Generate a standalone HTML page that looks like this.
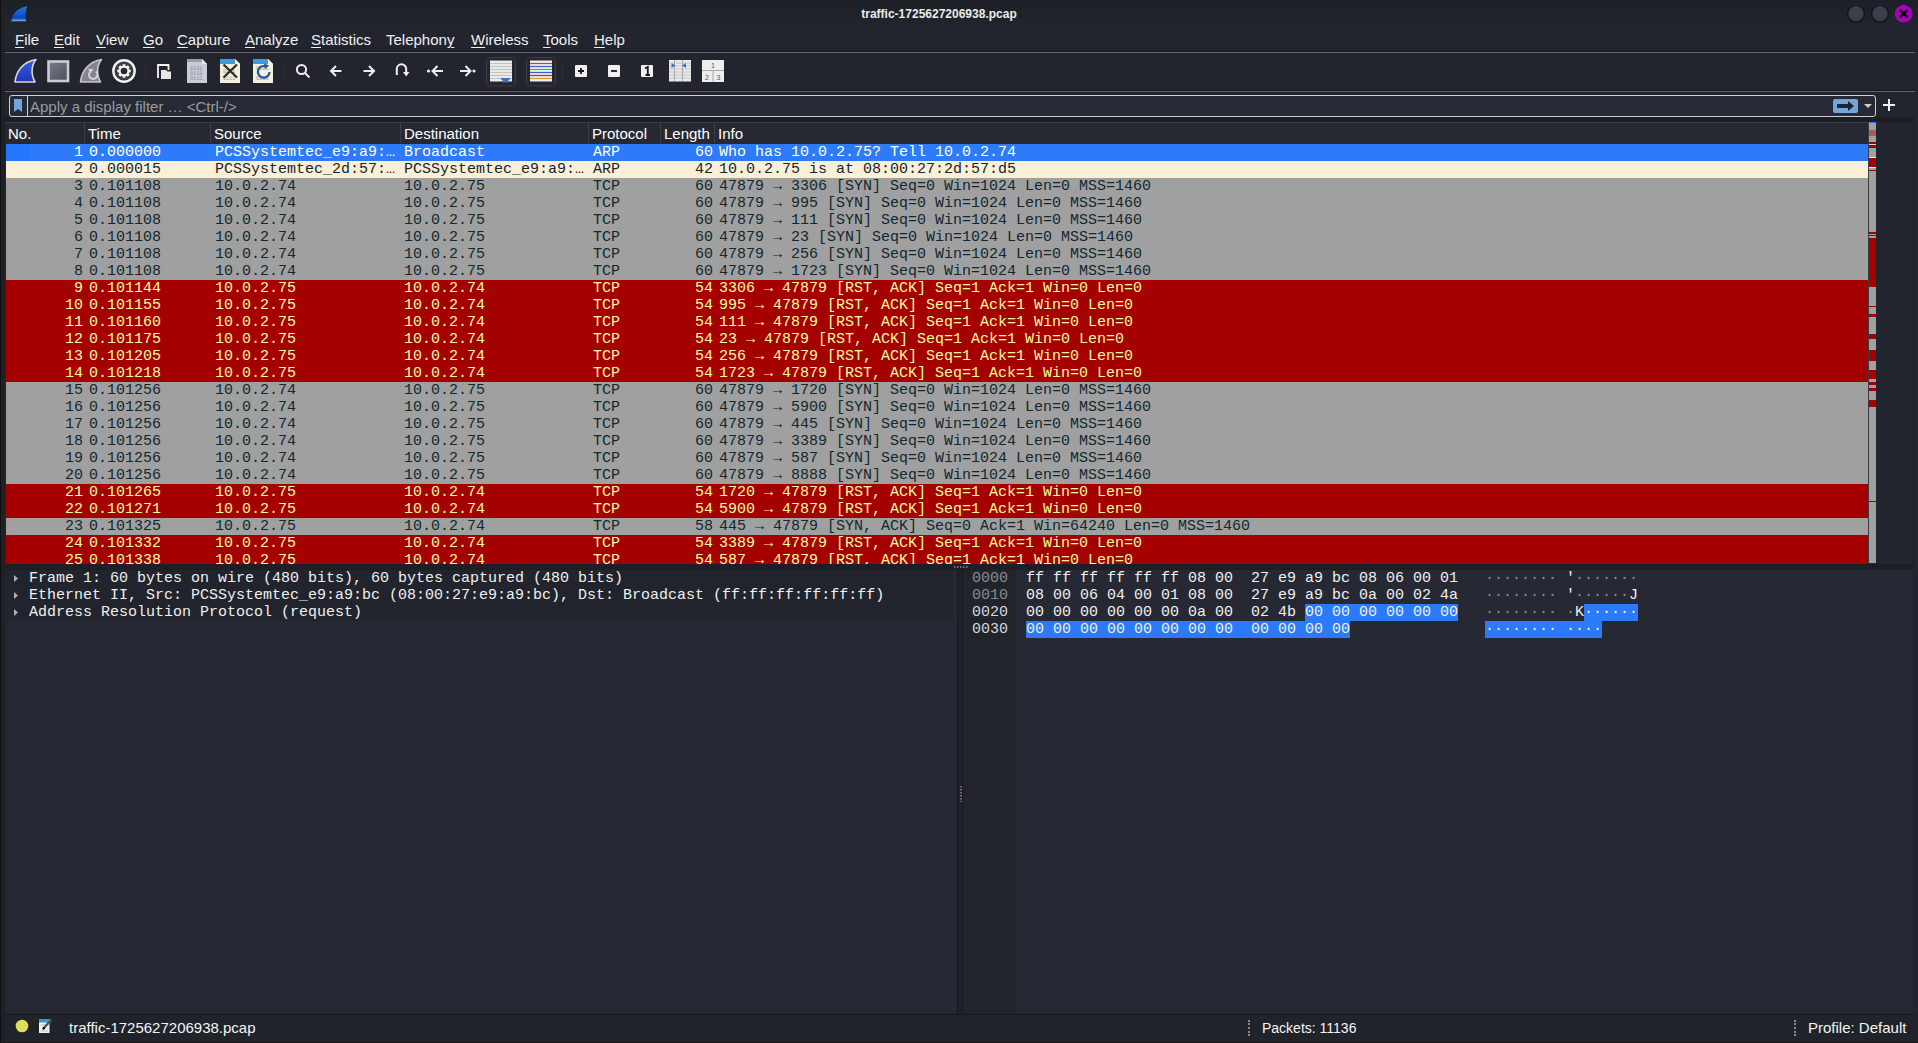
<!DOCTYPE html>
<html><head><meta charset="utf-8">
<style>
html,body{margin:0;padding:0;width:1918px;height:1043px;overflow:hidden;background:#22252d;font-family:"Liberation Sans",sans-serif;color:#fff;}
.abs{position:absolute;}
#lb{position:absolute;left:0;top:0;width:5px;height:1043px;background:#1f2127;border-left:1px solid #0e1013;box-sizing:border-box;}
#title{position:absolute;left:0;top:0;width:1878px;height:28px;text-align:center;font-size:12px;font-weight:bold;line-height:28px;color:#ececec;}
.menu{position:absolute;top:31px;font-size:15px;line-height:18px;color:#f0f0f0;}
.menu u{text-decoration:underline;text-underline-offset:2px;text-decoration-thickness:1px;}
.sep{position:absolute;left:5px;width:1910px;height:1px;background:#63666f;}
.sepd{position:absolute;left:5px;width:1910px;height:1px;background:#16181d;}
#filter{position:absolute;left:9px;top:95px;width:1865px;height:20px;border:1px solid #cfcfcf;border-radius:3px;background:#272a34;}
#fph{position:absolute;left:30px;top:98px;font-size:15px;line-height:18px;color:#9a9aa0;}
#hdr{position:absolute;left:6px;top:122px;width:1862px;height:22px;background:#262932;border-top:1px solid #3a3d45;box-sizing:border-box;}
.h{position:absolute;top:125px;font-size:15px;line-height:18px;color:#fff;}
.hs{position:absolute;top:123px;width:1px;height:20px;background:#3c3f48;}
.r{position:absolute;left:6px;width:1862px;height:17px;font-family:"Liberation Mono",monospace;font-size:15px;line-height:17px;white-space:pre;}
.r .c{position:absolute;top:0;}
.c.no{left:0;width:77px;text-align:right;}
.c.tm{left:83px;}
.c.src{left:209px;}
.c.dst{left:398px;}
.c.pr{left:587px;}
.c.ln{left:655px;width:52px;text-align:right;}
.c.inf{left:713px;}
.sel{background:linear-gradient(90deg,#2676fd 0,#2676fd 23px,#2d7bf8 23px);color:#fff;}
.arp{background:#faf0d7;color:#12272e;}
.syn{background:#a0a0a0;color:#12272e;}
.rst{background:#a40000;color:#fffc9c;}
.mono{font-family:"Liberation Mono",monospace;font-size:15px;line-height:17px;white-space:pre;}
#status{position:absolute;left:0;top:1013px;width:1918px;height:30px;}
</style></head><body>
<div class="abs" style="left:0;top:0;width:1918px;height:28px;background:linear-gradient(#1d1f26,#22252d)"></div>
<div id="lb"></div>
<div id="title">traffic-1725627206938.pcap</div>
<!-- shark logo -->
<svg class="abs" style="left:0;top:0" width="30" height="28" viewBox="0 0 30 28"><defs><linearGradient id="lg" x1="0" y1="0" x2="0" y2="1"><stop offset="0" stop-color="#1a7ae8"/><stop offset="0.8" stop-color="#0a48c0"/><stop offset="1" stop-color="#8ab0f0"/></linearGradient></defs><path d="M11.3 21.2 C12.5 13 18 8 27.2 6.3 C25.5 11 25 16 26 21.2 Z" fill="url(#lg)"/></svg>
<!-- window buttons -->
<svg class="abs" style="left:1840px;top:0" width="78" height="28" viewBox="0 0 78 28">
<circle cx="16" cy="13.7" r="8.3" fill="#3b3f4c" stroke="#111317" stroke-width="1.4"/>
<circle cx="40" cy="13.7" r="8.3" fill="#3b3f4c" stroke="#111317" stroke-width="1.4"/>
<circle cx="63.7" cy="13.7" r="8.9" fill="#a800b8"/>
<path d="M60 10 L67.4 17.4 M67.4 10 L60 17.4" stroke="#0a000a" stroke-width="2.4"/>
</svg>
<div class="menu" style="left:15px"><u>F</u>ile</div>
<div class="menu" style="left:54px"><u>E</u>dit</div>
<div class="menu" style="left:96px"><u>V</u>iew</div>
<div class="menu" style="left:143px"><u>G</u>o</div>
<div class="menu" style="left:177px"><u>C</u>apture</div>
<div class="menu" style="left:245px"><u>A</u>nalyze</div>
<div class="menu" style="left:311px"><u>S</u>tatistics</div>
<div class="menu" style="left:386px">Telephon<u>y</u></div>
<div class="menu" style="left:471px"><u>W</u>ireless</div>
<div class="menu" style="left:543px"><u>T</u>ools</div>
<div class="menu" style="left:594px"><u>H</u>elp</div>
<div class="sepd" style="top:51px"></div><div class="sep" style="top:52px"></div>
<svg class="abs" style="left:0;top:0" width="740" height="92" viewBox="0 0 740 92">
<defs>
<linearGradient id="gb" x1="0" y1="0" x2="0" y2="1"><stop offset="0" stop-color="#3a5fe0"/><stop offset="1" stop-color="#1f35b8"/></linearGradient>
<linearGradient id="gs" x1="0" y1="0" x2="1" y2="1"><stop offset="0" stop-color="#7a7d88"/><stop offset="1" stop-color="#4c4f58"/></linearGradient>
</defs>
<!-- 1 shark fin blue -->
<path d="M15 82 C16 72 22 62 36 59.5 C31.5 65 30.5 74 35 82 Z" fill="url(#gb)" stroke="#d6d6d6" stroke-width="1.6" stroke-linejoin="round"/>
<!-- 2 stop -->
<rect x="48.5" y="61.5" width="19.5" height="19.5" fill="url(#gs)" stroke="#c9ccd4" stroke-width="2.6"/>
<!-- 3 restart fin gray -->
<path d="M80.5 82 C81.5 72 87.5 62 101.5 59.5 C97 65 96 74 100.5 82 Z" fill="#84868e" stroke="#c4c6cc" stroke-width="1.6" stroke-linejoin="round"/>
<path d="M89.6 72.6 A4.2 4.2 0 1 0 95.8 71.4" fill="none" stroke="#d4d6da" stroke-width="1.9"/>
<path d="M88.2 68.8 L93.6 69.2 L90.2 73.6 Z" fill="#d4d6da"/>
<!-- 4 options gear -->
<circle cx="124" cy="71" r="10.7" fill="#3c3c40" stroke="#f2f2f2" stroke-width="2.4"/>
<path d="M129.06 69.43 L130.76 69.63 L130.76 72.37 L129.06 72.57 L128.69 73.47 L129.75 74.81 L127.81 76.75 L126.47 75.69 L125.57 76.06 L125.37 77.76 L122.63 77.76 L122.43 76.06 L121.53 75.69 L120.19 76.75 L118.25 74.81 L119.31 73.47 L118.94 72.57 L117.24 72.37 L117.24 69.63 L118.94 69.43 L119.31 68.53 L118.25 67.19 L120.19 65.25 L121.53 66.31 L122.43 65.94 L122.63 64.24 L125.37 64.24 L125.57 65.94 L126.47 66.31 L127.81 65.25 L129.75 67.19 L128.69 68.53 Z" fill="#f4f4f4"/>
<circle cx="124" cy="71" r="3.3" fill="#2a2a2e"/>
<!-- 5 open -->
<path d="M158 78 V65 H168.5 V70" fill="none" stroke="#f4f4f4" stroke-width="1.8"/>
<path d="M161 70 H166 L167.5 71.5 H171 V79 H161 Z" fill="#e6e6e6"/>
<!-- 6 file gray -->
<path d="M187 59 H202 L207 64 V83 H187 Z" fill="#c9ccd6"/>
<path d="M187 59 H202 L205 62 H187 Z" fill="#9c9ea6"/>
<path d="M202 59 V64 H207 Z" fill="#e8e9ee"/>
<text x="190" y="70" font-family="Liberation Mono" font-size="5.2" fill="#8a8c96">0101</text>
<text x="190" y="75" font-family="Liberation Mono" font-size="5.2" fill="#8a8c96">0110</text>
<text x="190" y="80" font-family="Liberation Mono" font-size="5.2" fill="#8a8c96">0111</text>
<!-- 7 close file -->
<path d="M220 59 H235 L240 64 V83 H220 Z" fill="#f2f0dc"/>
<rect x="220" y="59" width="16" height="5" fill="#3c9ce0"/>
<path d="M235 59 V64 H240 Z" fill="#f8f8f0"/>
<text x="223" y="73" font-family="Liberation Mono" font-size="5.2" fill="#9a9a90">0101</text>
<text x="223" y="80" font-family="Liberation Mono" font-size="5.2" fill="#9a9a90">0111</text>
<path d="M223.5 64.5 L237 77.5 M237 64.5 L223.5 77.5" stroke="#2a2a2a" stroke-width="2.2"/>
<!-- 8 reload file -->
<path d="M253 59 H268 L273 64 V83 H253 Z" fill="#f2f0dc"/>
<rect x="253" y="59" width="16" height="5" fill="#3c9ce0"/>
<path d="M268 59 V64 H273 Z" fill="#f8f8f0"/>
<text x="256" y="70" font-family="Liberation Mono" font-size="5.2" fill="#9a9a90">0101</text>
<text x="256" y="80" font-family="Liberation Mono" font-size="5.2" fill="#9a9a90">0111</text>
<path d="M266 66.5 A5.8 5.8 0 1 0 269.5 72" fill="none" stroke="#1f55a8" stroke-width="2.2"/>
<path d="M264 63.5 L269 65.5 L265 69 Z" fill="#1f55a8"/>
<!-- 9 search -->
<circle cx="301.5" cy="69.5" r="4.6" fill="none" stroke="#eeeeee" stroke-width="2"/>
<path d="M305 73 L309.5 77.5" stroke="#eeeeee" stroke-width="1.8"/>
<!-- 10 back -->
<path d="M341.5 71 H331 M336 66 L331 71 L336 76" fill="none" stroke="#eeeeee" stroke-width="2"/>
<!-- 11 forward -->
<path d="M363.5 71 H374 M369 66 L374 71 L369 76" fill="none" stroke="#eeeeee" stroke-width="2"/>
<!-- 12 jump -->
<path d="M396.8 75 V69 A4.7 4.7 0 0 1 406.2 69 V73" fill="none" stroke="#eeeeee" stroke-width="2"/>
<path d="M403 72 H409.5 L406.2 76.5 Z" fill="#eeeeee"/>
<!-- 13 first -->
<circle cx="428.5" cy="71" r="1.6" fill="#eeeeee"/>
<path d="M443 71 H433 M437.5 66 L432.5 71 L437.5 76" fill="none" stroke="#eeeeee" stroke-width="2"/>
<!-- 14 last -->
<circle cx="474" cy="71" r="1.6" fill="#eeeeee"/>
<path d="M460 71 H470 M465.5 66 L470.5 71 L465.5 76" fill="none" stroke="#eeeeee" stroke-width="2"/>
<!-- 15 autoscroll (checked) -->
<rect x="486.5" y="57.5" width="29" height="28.5" rx="3" fill="#24272f" stroke="#3a3d46" stroke-width="1"/>
<rect x="490" y="60.5" width="22" height="21" fill="#eaeaea"/>
<path d="M490 63.5 H512 M490 66.5 H512 M490 69.5 H512 M490 72.5 H512 M490 75.5 H512 M490 78.5 H512" stroke="#b8b8b8" stroke-width="0.8"/>
<path d="M500 78 H511 L508 81 V82.5 H503 V81 Z" fill="#3a72c0"/>
<!-- 16 colorize (checked) -->
<rect x="526.5" y="57.5" width="29" height="28.5" rx="3" fill="#24272f" stroke="#3a3d46" stroke-width="1"/>
<rect x="530" y="60.5" width="22" height="21" fill="#eeeeee"/>
<path d="M530 63.5 H552" stroke="#e03a3a" stroke-width="1.2"/>
<path d="M530 66.5 H552" stroke="#3a5fc8" stroke-width="1.2"/>
<path d="M530 69.5 H552" stroke="#40b840" stroke-width="1.2"/>
<path d="M530 72.5 H552" stroke="#3a5fc8" stroke-width="1.2"/>
<path d="M530 75.5 H552" stroke="#7a3a9a" stroke-width="1.2"/>
<path d="M530 78.5 H552" stroke="#d0a020" stroke-width="1.2"/>
<!-- 17 zoom in -->
<rect x="575" y="65" width="12" height="12" rx="1" fill="#f0f0f0"/>
<path d="M578 71 H584 M581 68 V74" stroke="#1a1a1a" stroke-width="1.8"/>
<!-- 18 zoom out -->
<rect x="608" y="65" width="12" height="12" rx="1" fill="#f0f0f0"/>
<path d="M611 71 H617" stroke="#1a1a1a" stroke-width="1.8"/>
<!-- 19 normal -->
<rect x="641" y="65" width="12" height="12" rx="1" fill="#f0f0f0"/>
<path d="M645 68.5 L647.8 66.8 V75 M645.5 75 H650" fill="none" stroke="#1a1a1a" stroke-width="1.8"/>
<!-- 20 resize columns -->
<rect x="669" y="60" width="22" height="21.5" fill="#eaeaea"/>
<path d="M669 63 H691 M669 66 H691 M669 69 H691 M669 72 H691 M669 75 H691 M669 78 H691" stroke="#bdbdbd" stroke-width="0.8"/>
<path d="M674.5 60 V81.5 M682.5 60 V81.5" stroke="#9a9a9a" stroke-width="0.8"/>
<path d="M671.5 63 L675.5 65.5 L671.5 68 Z M686 63 L682 65.5 L686 68 Z" fill="#3a72c0"/>
<!-- 21 layout -->
<rect x="702" y="60" width="22" height="22" fill="#eeeeee"/>
<path d="M702 70.5 H724 M713 70.5 V82" stroke="#a8a8a8" stroke-width="1"/>
<text x="711" y="68" font-family="Liberation Sans" font-size="7" fill="#555">1</text>
<text x="705" y="79.5" font-family="Liberation Sans" font-size="7" fill="#555">2</text>
<text x="716.5" y="79.5" font-family="Liberation Sans" font-size="7" fill="#555">3</text>
<path d="M145.5 63.5 V80" stroke="#2a2d35" stroke-width="1"/>
<path d="M284.5 63.5 V80" stroke="#2a2d35" stroke-width="1"/>
<path d="M562.5 63.5 V80" stroke="#2a2d35" stroke-width="1"/>
</svg>

<div class="sepd" style="top:90px"></div><div class="sep" style="top:91px"></div>
<div id="filter"></div>
<div class="abs" style="left:27px;top:96px;width:1px;height:20px;background:#cfcfcf"></div>
<svg class="abs" style="left:13px;top:99px" width="10" height="14" viewBox="0 0 10 14"><path d="M1 0 H9 V13 L5 10 L1 13 Z" fill="#6fa6dc"/></svg>
<div id="fph">Apply a display filter … &lt;Ctrl-/&gt;</div>
<svg class="abs" style="left:1833px;top:99px" width="26" height="14" viewBox="0 0 26 14"><rect x="0" y="0" width="25" height="14" rx="2" fill="#6fa6dc"/><path d="M4 5 H15 V2 L21 7 L15 12 V9 H4 Z" fill="#1d2430"/></svg>
<svg class="abs" style="left:1863px;top:103px" width="10" height="6" viewBox="0 0 10 6"><path d="M1 1 H9 L5 5 Z" fill="#cfcfcf"/></svg>
<svg class="abs" style="left:1882px;top:98px" width="14" height="14" viewBox="0 0 14 14"><path d="M7 1 V13 M1 7 H13" stroke="#f0f0f0" stroke-width="2"/></svg>

<div class="abs" style="left:5px;top:117px;width:1908px;height:5px;background:#1c1e25"></div>
<div id="hdr"></div>
<div class="h" style="left:8px">No.</div>
<div class="hs" style="left:84px"></div>
<div class="h" style="left:88px">Time</div>
<div class="hs" style="left:210px"></div>
<div class="h" style="left:214px">Source</div>
<div class="hs" style="left:400px"></div>
<div class="h" style="left:404px">Destination</div>
<div class="hs" style="left:588px"></div>
<div class="h" style="left:592px">Protocol</div>
<div class="hs" style="left:660px"></div>
<div class="h" style="left:664px">Length</div>
<div class="hs" style="left:714px"></div>
<div class="h" style="left:718px">Info</div>
<div class="abs" style="left:6px;top:144px;width:1862px;height:420px;overflow:hidden">
<div style="position:absolute;left:-6px;top:-144px;width:1918px;height:600px">
<div class="r sel" style="top:144px"><span class="c no">1</span><span class="c tm">0.000000</span><span class="c src">PCSSystemtec_e9:a9:…</span><span class="c dst">Broadcast</span><span class="c pr">ARP</span><span class="c ln">60</span><span class="c inf">Who has 10.0.2.75? Tell 10.0.2.74</span></div>
<div class="r arp" style="top:161px"><span class="c no">2</span><span class="c tm">0.000015</span><span class="c src">PCSSystemtec_2d:57:…</span><span class="c dst">PCSSystemtec_e9:a9:…</span><span class="c pr">ARP</span><span class="c ln">42</span><span class="c inf">10.0.2.75 is at 08:00:27:2d:57:d5</span></div>
<div class="r syn" style="top:178px"><span class="c no">3</span><span class="c tm">0.101108</span><span class="c src">10.0.2.74</span><span class="c dst">10.0.2.75</span><span class="c pr">TCP</span><span class="c ln">60</span><span class="c inf">47879 → 3306 [SYN] Seq=0 Win=1024 Len=0 MSS=1460</span></div>
<div class="r syn" style="top:195px"><span class="c no">4</span><span class="c tm">0.101108</span><span class="c src">10.0.2.74</span><span class="c dst">10.0.2.75</span><span class="c pr">TCP</span><span class="c ln">60</span><span class="c inf">47879 → 995 [SYN] Seq=0 Win=1024 Len=0 MSS=1460</span></div>
<div class="r syn" style="top:212px"><span class="c no">5</span><span class="c tm">0.101108</span><span class="c src">10.0.2.74</span><span class="c dst">10.0.2.75</span><span class="c pr">TCP</span><span class="c ln">60</span><span class="c inf">47879 → 111 [SYN] Seq=0 Win=1024 Len=0 MSS=1460</span></div>
<div class="r syn" style="top:229px"><span class="c no">6</span><span class="c tm">0.101108</span><span class="c src">10.0.2.74</span><span class="c dst">10.0.2.75</span><span class="c pr">TCP</span><span class="c ln">60</span><span class="c inf">47879 → 23 [SYN] Seq=0 Win=1024 Len=0 MSS=1460</span></div>
<div class="r syn" style="top:246px"><span class="c no">7</span><span class="c tm">0.101108</span><span class="c src">10.0.2.74</span><span class="c dst">10.0.2.75</span><span class="c pr">TCP</span><span class="c ln">60</span><span class="c inf">47879 → 256 [SYN] Seq=0 Win=1024 Len=0 MSS=1460</span></div>
<div class="r syn" style="top:263px"><span class="c no">8</span><span class="c tm">0.101108</span><span class="c src">10.0.2.74</span><span class="c dst">10.0.2.75</span><span class="c pr">TCP</span><span class="c ln">60</span><span class="c inf">47879 → 1723 [SYN] Seq=0 Win=1024 Len=0 MSS=1460</span></div>
<div class="r rst" style="top:280px"><span class="c no">9</span><span class="c tm">0.101144</span><span class="c src">10.0.2.75</span><span class="c dst">10.0.2.74</span><span class="c pr">TCP</span><span class="c ln">54</span><span class="c inf">3306 → 47879 [RST, ACK] Seq=1 Ack=1 Win=0 Len=0</span></div>
<div class="r rst" style="top:297px"><span class="c no">10</span><span class="c tm">0.101155</span><span class="c src">10.0.2.75</span><span class="c dst">10.0.2.74</span><span class="c pr">TCP</span><span class="c ln">54</span><span class="c inf">995 → 47879 [RST, ACK] Seq=1 Ack=1 Win=0 Len=0</span></div>
<div class="r rst" style="top:314px"><span class="c no">11</span><span class="c tm">0.101160</span><span class="c src">10.0.2.75</span><span class="c dst">10.0.2.74</span><span class="c pr">TCP</span><span class="c ln">54</span><span class="c inf">111 → 47879 [RST, ACK] Seq=1 Ack=1 Win=0 Len=0</span></div>
<div class="r rst" style="top:331px"><span class="c no">12</span><span class="c tm">0.101175</span><span class="c src">10.0.2.75</span><span class="c dst">10.0.2.74</span><span class="c pr">TCP</span><span class="c ln">54</span><span class="c inf">23 → 47879 [RST, ACK] Seq=1 Ack=1 Win=0 Len=0</span></div>
<div class="r rst" style="top:348px"><span class="c no">13</span><span class="c tm">0.101205</span><span class="c src">10.0.2.75</span><span class="c dst">10.0.2.74</span><span class="c pr">TCP</span><span class="c ln">54</span><span class="c inf">256 → 47879 [RST, ACK] Seq=1 Ack=1 Win=0 Len=0</span></div>
<div class="r rst" style="top:365px"><span class="c no">14</span><span class="c tm">0.101218</span><span class="c src">10.0.2.75</span><span class="c dst">10.0.2.74</span><span class="c pr">TCP</span><span class="c ln">54</span><span class="c inf">1723 → 47879 [RST, ACK] Seq=1 Ack=1 Win=0 Len=0</span></div>
<div class="r syn" style="top:382px"><span class="c no">15</span><span class="c tm">0.101256</span><span class="c src">10.0.2.74</span><span class="c dst">10.0.2.75</span><span class="c pr">TCP</span><span class="c ln">60</span><span class="c inf">47879 → 1720 [SYN] Seq=0 Win=1024 Len=0 MSS=1460</span></div>
<div class="r syn" style="top:399px"><span class="c no">16</span><span class="c tm">0.101256</span><span class="c src">10.0.2.74</span><span class="c dst">10.0.2.75</span><span class="c pr">TCP</span><span class="c ln">60</span><span class="c inf">47879 → 5900 [SYN] Seq=0 Win=1024 Len=0 MSS=1460</span></div>
<div class="r syn" style="top:416px"><span class="c no">17</span><span class="c tm">0.101256</span><span class="c src">10.0.2.74</span><span class="c dst">10.0.2.75</span><span class="c pr">TCP</span><span class="c ln">60</span><span class="c inf">47879 → 445 [SYN] Seq=0 Win=1024 Len=0 MSS=1460</span></div>
<div class="r syn" style="top:433px"><span class="c no">18</span><span class="c tm">0.101256</span><span class="c src">10.0.2.74</span><span class="c dst">10.0.2.75</span><span class="c pr">TCP</span><span class="c ln">60</span><span class="c inf">47879 → 3389 [SYN] Seq=0 Win=1024 Len=0 MSS=1460</span></div>
<div class="r syn" style="top:450px"><span class="c no">19</span><span class="c tm">0.101256</span><span class="c src">10.0.2.74</span><span class="c dst">10.0.2.75</span><span class="c pr">TCP</span><span class="c ln">60</span><span class="c inf">47879 → 587 [SYN] Seq=0 Win=1024 Len=0 MSS=1460</span></div>
<div class="r syn" style="top:467px"><span class="c no">20</span><span class="c tm">0.101256</span><span class="c src">10.0.2.74</span><span class="c dst">10.0.2.75</span><span class="c pr">TCP</span><span class="c ln">60</span><span class="c inf">47879 → 8888 [SYN] Seq=0 Win=1024 Len=0 MSS=1460</span></div>
<div class="r rst" style="top:484px"><span class="c no">21</span><span class="c tm">0.101265</span><span class="c src">10.0.2.75</span><span class="c dst">10.0.2.74</span><span class="c pr">TCP</span><span class="c ln">54</span><span class="c inf">1720 → 47879 [RST, ACK] Seq=1 Ack=1 Win=0 Len=0</span></div>
<div class="r rst" style="top:501px"><span class="c no">22</span><span class="c tm">0.101271</span><span class="c src">10.0.2.75</span><span class="c dst">10.0.2.74</span><span class="c pr">TCP</span><span class="c ln">54</span><span class="c inf">5900 → 47879 [RST, ACK] Seq=1 Ack=1 Win=0 Len=0</span></div>
<div class="r syn" style="top:518px"><span class="c no">23</span><span class="c tm">0.101325</span><span class="c src">10.0.2.75</span><span class="c dst">10.0.2.74</span><span class="c pr">TCP</span><span class="c ln">58</span><span class="c inf">445 → 47879 [SYN, ACK] Seq=0 Ack=1 Win=64240 Len=0 MSS=1460</span></div>
<div class="r rst" style="top:535px"><span class="c no">24</span><span class="c tm">0.101332</span><span class="c src">10.0.2.75</span><span class="c dst">10.0.2.74</span><span class="c pr">TCP</span><span class="c ln">54</span><span class="c inf">3389 → 47879 [RST, ACK] Seq=1 Ack=1 Win=0 Len=0</span></div>
<div class="r rst" style="top:552px"><span class="c no">25</span><span class="c tm">0.101338</span><span class="c src">10.0.2.75</span><span class="c dst">10.0.2.74</span><span class="c pr">TCP</span><span class="c ln">54</span><span class="c inf">587 → 47879 [RST, ACK] Seq=1 Ack=1 Win=0 Len=0</span></div>
</div></div>
<div class="abs" style="left:1868px;top:122px;width:1px;height:441px;background:#3a3d44"></div>
<div style="position:absolute;left:1869px;width:7px;top:122px;height:1px;background:#2a7afa"></div><div style="position:absolute;left:1869px;width:7px;top:123px;height:7px;background:#a0a0a0"></div><div style="position:absolute;left:1869px;width:7px;top:130px;height:6px;background:#b25a5a"></div><div style="position:absolute;left:1869px;width:7px;top:136px;height:6px;background:#a0a0a0"></div><div style="position:absolute;left:1869px;width:7px;top:142px;height:2px;background:#a40000"></div><div style="position:absolute;left:1869px;width:7px;top:144px;height:1px;background:#d8d8d8"></div><div style="position:absolute;left:1869px;width:7px;top:145px;height:3px;background:#a40000"></div><div style="position:absolute;left:1869px;width:7px;top:148px;height:9px;background:#a0a0a0"></div><div style="position:absolute;left:1869px;width:7px;top:157px;height:1px;background:#faf0d7"></div><div style="position:absolute;left:1869px;width:7px;top:158px;height:9px;background:#a40000"></div><div style="position:absolute;left:1869px;width:7px;top:167px;height:1px;background:#faf0d7"></div><div style="position:absolute;left:1869px;width:7px;top:168px;height:2px;background:#a0a0a0"></div><div style="position:absolute;left:1869px;width:7px;top:170px;height:1px;background:#a40000"></div><div style="position:absolute;left:1869px;width:7px;top:171px;height:61px;background:#a0a0a0"></div><div style="position:absolute;left:1869px;width:7px;top:232px;height:2px;background:#a40000"></div><div style="position:absolute;left:1869px;width:7px;top:234px;height:1px;background:#a0a0a0"></div><div style="position:absolute;left:1869px;width:7px;top:235px;height:1px;background:#a40000"></div><div style="position:absolute;left:1869px;width:7px;top:236px;height:2px;background:#a0a0a0"></div><div style="position:absolute;left:1869px;width:7px;top:238px;height:49px;background:#a40000"></div><div style="position:absolute;left:1869px;width:7px;top:287px;height:19px;background:#a0a0a0"></div><div style="position:absolute;left:1869px;width:7px;top:306px;height:1px;background:#a40000"></div><div style="position:absolute;left:1869px;width:7px;top:307px;height:7px;background:#a0a0a0"></div><div style="position:absolute;left:1869px;width:7px;top:314px;height:3px;background:#a40000"></div><div style="position:absolute;left:1869px;width:7px;top:317px;height:17px;background:#a0a0a0"></div><div style="position:absolute;left:1869px;width:7px;top:334px;height:5px;background:#a40000"></div><div style="position:absolute;left:1869px;width:7px;top:339px;height:11px;background:#a0a0a0"></div><div style="position:absolute;left:1869px;width:7px;top:350px;height:11px;background:#a40000"></div><div style="position:absolute;left:1869px;width:7px;top:361px;height:9px;background:#a0a0a0"></div><div style="position:absolute;left:1869px;width:7px;top:370px;height:9px;background:#a40000"></div><div style="position:absolute;left:1869px;width:7px;top:379px;height:3px;background:#a0a0a0"></div><div style="position:absolute;left:1869px;width:7px;top:382px;height:3px;background:#a40000"></div><div style="position:absolute;left:1869px;width:7px;top:385px;height:3px;background:#a0a0a0"></div><div style="position:absolute;left:1869px;width:7px;top:388px;height:3px;background:#a40000"></div><div style="position:absolute;left:1869px;width:7px;top:391px;height:9px;background:#a0a0a0"></div><div style="position:absolute;left:1869px;width:7px;top:400px;height:7px;background:#a40000"></div><div style="position:absolute;left:1869px;width:7px;top:407px;height:94px;background:#a0a0a0"></div><div style="position:absolute;left:1869px;width:7px;top:501px;height:1px;background:#a40000"></div><div style="position:absolute;left:1869px;width:7px;top:502px;height:61px;background:#a0a0a0"></div>
<div class="abs" style="left:1913px;top:118px;width:1px;height:450px;background:#1a1c21"></div>

<!-- details pane -->
<div class="abs" style="left:5px;top:564px;width:1908px;height:6px;background:#1d1f26"></div>
<div class="abs" style="left:6px;top:570px;width:951px;height:443px;background:#262933"></div>
<div class="abs" style="left:6px;top:570px;width:947px;height:51px;background:#21242c"></div>
<div class="abs mono" style="left:29px;top:570px;color:#f0f0f0">Frame 1: 60 bytes on wire (480 bits), 60 bytes captured (480 bits)
Ethernet II, Src: PCSSystemtec_e9:a9:bc (08:00:27:e9:a9:bc), Dst: Broadcast (ff:ff:ff:ff:ff:ff)
Address Resolution Protocol (request)</div>
<svg class="abs" style="left:13px;top:574px" width="6" height="50" viewBox="0 0 6 50"><path d="M1 1 L5 4.5 L1 8 Z M1 18 L5 21.5 L1 25 Z M1 35 L5 38.5 L1 42 Z" fill="#b0b0b4"/></svg>
<div class="abs" style="left:957px;top:570px;width:1px;height:443px;background:#16181d"></div>
<div class="abs" style="left:958px;top:570px;width:4px;height:443px;background:#1f2128"></div>
<div class="abs" style="left:962px;top:570px;width:1px;height:443px;background:#16181d"></div>
<!-- bytes pane -->
<div class="abs" style="left:963px;top:570px;width:53px;height:443px;background:#21242b"></div>
<div class="abs" style="left:1016px;top:570px;width:897px;height:443px;background:#262933"></div>
<div class="abs mono" style="left:972px;top:570px;color:#8a8a8a">0000
0010</div>
<div class="abs mono" style="left:972px;top:604px;color:#d8d8d8">0020
0030</div>
<div class="abs" style="left:1305px;top:604px;width:153px;height:17px;background:#2a7afa"></div>
<div class="abs" style="left:1026px;top:621px;width:324px;height:17px;background:#2a7afa"></div>
<div class="abs" style="left:1584px;top:604px;width:54px;height:17px;background:#2a7afa"></div>
<div class="abs" style="left:1485px;top:621px;width:117px;height:17px;background:#2a7afa"></div>
<div class="abs mono" style="left:1026px;top:570px;color:#f0f0f0">ff ff ff ff ff ff 08 00  27 e9 a9 bc 08 06 00 01
08 00 06 04 00 01 08 00  27 e9 a9 bc 0a 00 02 4a
00 00 00 00 00 00 0a 00  02 4b 00 00 00 00 00 00
00 00 00 00 00 00 00 00  00 00 00 00</div>
<div class="abs mono" style="left:1485px;top:570px;color:#8a8a8a">········ <span style="color:#f0f0f0">'</span>·······
········ <span style="color:#f0f0f0">'</span>······<span style="color:#f0f0f0">J</span>
········ ·<span style="color:#f0f0f0">K</span><span style="color:#f4f4f4">······</span>
<span style="color:#f4f4f4">········ ····</span></div>
<!-- splitter dots -->
<svg class="abs" style="left:950px;top:565px" width="20" height="4" viewBox="0 0 20 4"><path d="M4 2 H18" stroke="#8a8a90" stroke-width="1.5" stroke-dasharray="1.5 1.5"/></svg>
<svg class="abs" style="left:959px;top:784px" width="4" height="20" viewBox="0 0 4 20"><path d="M2 2 V18" stroke="#8a8a90" stroke-width="1.5" stroke-dasharray="1.5 1.5"/></svg>

<!-- status bar -->
<div class="abs" style="left:5px;top:1013px;width:1908px;height:1px;background:#1f2229"></div>
<div class="abs" style="left:5px;top:1014px;width:1908px;height:1px;background:#17191e"></div>
<div class="abs" style="left:5px;top:1015px;width:1913px;height:27px;background:#20232a"></div>
<div class="abs" style="left:0;top:1042px;width:1918px;height:1px;background:#17191e"></div>
<svg class="abs" style="left:10px;top:1015px" width="50" height="22" viewBox="0 0 50 22">
<circle cx="12" cy="11" r="6.3" fill="#dede5e"/>
<rect x="29" y="4" width="10.5" height="14" fill="#f2f2ee"/>
<rect x="29" y="4" width="10.5" height="3.5" fill="#2f9ae0"/>
<path d="M30.5 10 H37 M30.5 16 H38" stroke="#b0b0b0" stroke-width="0.8"/>
<path d="M33.5 13.5 L40.5 5.5" stroke="#555" stroke-width="2.6" stroke-linecap="round"/>
<path d="M33 14 L34.5 12.5" stroke="#111" stroke-width="2"/>
</svg>
<div class="abs" style="left:69px;top:1019px;font-size:15px;line-height:18px;color:#f4f4f4">traffic-1725627206938.pcap</div>
<div class="abs" style="left:1248px;top:1020px;width:0;height:16px;border-left:2px dotted #8a8a8a"></div>
<div class="abs" style="left:1262px;top:1019px;font-size:14px;line-height:18px;color:#f4f4f4">Packets: 11136</div>
<div class="abs" style="left:1794px;top:1020px;width:0;height:16px;border-left:2px dotted #8a8a8a"></div>
<div class="abs" style="left:1808px;top:1019px;font-size:15px;line-height:18px;color:#f4f4f4">Profile: Default</div>
</body></html>
